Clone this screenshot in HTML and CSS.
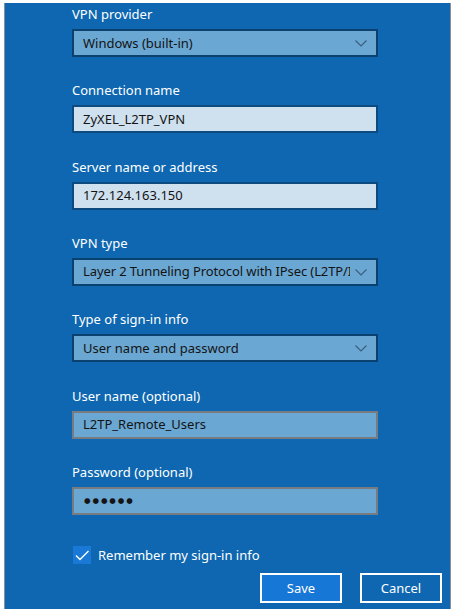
FILE: index.html
```html
<!DOCTYPE html>
<html lang="en">
<head>
<meta charset="utf-8">
<title>Add a VPN connection</title>
<link rel="stylesheet" href="styles.css">
</head>
<body>
<div class="frame">
  <div class="form">
    <div class="field">
      <div class="label">VPN provider</div>
      <div class="box select">
        <span class="value">Windows (built-in)</span>
        <svg class="chev" width="12" height="7" viewBox="0 0 12 7"><path d="M0.5 0.5 L6 6 L11.5 0.5" fill="none" stroke="#3d5d7e" stroke-width="1.2"/></svg>
      </div>
    </div>
    <div class="field">
      <div class="label">Connection name</div>
      <div class="box text"><span class="value">ZyXEL_L2TP_VPN</span></div>
    </div>
    <div class="field">
      <div class="label">Server name or address</div>
      <div class="box text"><span class="value">172.124.163.150</span></div>
    </div>
    <div class="field">
      <div class="label">VPN type</div>
      <div class="box select">
        <span class="value tight">Layer 2 Tunneling Protocol with IPsec (L2TP/IPsec)</span>
        <svg class="chev" width="12" height="7" viewBox="0 0 12 7"><path d="M0.5 0.5 L6 6 L11.5 0.5" fill="none" stroke="#3d5d7e" stroke-width="1.2"/></svg>
      </div>
    </div>
    <div class="field">
      <div class="label">Type of sign-in info</div>
      <div class="box select">
        <span class="value">User name and password</span>
        <svg class="chev" width="12" height="7" viewBox="0 0 12 7"><path d="M0.5 0.5 L6 6 L11.5 0.5" fill="none" stroke="#3d5d7e" stroke-width="1.2"/></svg>
      </div>
    </div>
    <div class="field">
      <div class="label">User name (optional)</div>
      <div class="box plain"><span class="value">L2TP_Remote_Users</span></div>
    </div>
    <div class="field">
      <div class="label">Password (optional)</div>
      <div class="box plain"><span class="value dots">●●●●●●</span></div>
    </div>
  </div>
  <div class="check-row">
    <span class="checkbox">
      <svg width="18" height="18" viewBox="0 0 18 18"><path d="M3 9.5 L7 13.5 L15.5 5" fill="none" stroke="#ffffff" stroke-width="1.4"/></svg>
    </span>
    <span class="check-label">Remember my sign-in info</span>
  </div>
  <div class="buttons">
    <button class="btn primary" type="button">Save</button>
    <button class="btn" type="button">Cancel</button>
  </div>
</div>
</body>
</html>
```

FILE: styles.css
```css
html, body {
  margin: 0;
  padding: 0;
  background: #ffffff;
}

body {
  font-family: "Noto Sans", "Open Sans", sans-serif;
  font-size: 13px;
}

.frame {
  margin: 3px 0 0 4px;
  width: 445px;
  height: 606px;
  border-left: 1px solid #8a8f95;
  border-right: 1px solid #8a8f95;
  background: #0e67b0;
  color: #ffffff;
  box-sizing: content-box;
  display: flex;
  flex-direction: column;
}

.form {
  display: flex;
  flex-direction: column;
  gap: 24.33px;
  padding: 2px 0 0 67px;
}

.field {
  display: flex;
  flex-direction: column;
}

.label {
  height: 19px;
  line-height: 19px;
  margin-bottom: 5px;
  white-space: nowrap;
}

.box {
  box-sizing: border-box;
  width: 306px;
  height: 28px;
  border: 2px solid #0b416e;
  display: flex;
  align-items: center;
  padding: 0 9px 0 9px;
  color: #141414;
  overflow: hidden;
}

.select {
  background: #6aa7d3;
}

.text {
  background: #cfe0ee;
  border-color: #0c4a80;
}

.plain {
  background: #6aa7d3;
  border-color: #787c80;
}

.value {
  flex: 1;
  white-space: nowrap;
  overflow: hidden;
  line-height: 19px;
}

.tight {
  letter-spacing: -0.1px;
}

.chev {
  flex: none;
  margin-left: 5px;
  margin-top: 1px;
}

.dots {
  font-family: "DejaVu Sans", sans-serif;
  font-size: 7.5px;
  letter-spacing: 1.9px;
  padding-left: 1px;
}

.check-row {
  display: flex;
  align-items: center;
  gap: 7px;
  margin: 31px 0 0 68px;
}

.checkbox {
  width: 18px;
  height: 18px;
  background: #1a79d6;
  display: flex;
}

.check-label {
  line-height: 18px;
}

.buttons {
  display: flex;
  justify-content: flex-end;
  gap: 18px;
  margin: 9px 8px 0 0;
}

.btn {
  box-sizing: border-box;
  width: 82px;
  height: 30px;
  border: 2px solid #ffffff;
  background: #0e67b0;
  color: #ffffff;
  font-family: inherit;
  font-size: 13px;
  padding: 0;
}

.btn.primary {
  background: #1677d6;
}
```
